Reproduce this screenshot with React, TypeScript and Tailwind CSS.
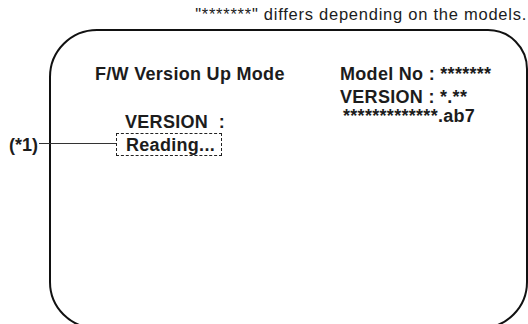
export default function App() {
  return (
    <div className="relative w-[528px] h-[324px] overflow-hidden bg-white text-[#1c1c1c] font-['Liberation_Sans',Arial,sans-serif]">
      <div className="pt-[4px] pr-[1px] text-right text-[16.5px] leading-[20px] tracking-[0.75px] whitespace-nowrap">
        "*******" differs depending on the models.
      </div>

      <div className="mt-[5px] ml-[49px] w-[479px] h-[300px] border-2 border-[#111] rounded-tl-[48px] rounded-tr-[40px] rounded-b-[47px]">
        <div className="flex pt-[32px] font-bold text-[18px] tracking-[0.3px]">
          <div className="pl-[44px] w-[289px] shrink-0">
            <div className="leading-[22px]">F/W Version Up Mode</div>
            <div className="mt-[26px] ml-[30px] leading-[22px] whitespace-pre">VERSION  :</div>
            <div className="ml-[21px] w-[106px] h-[23px] border border-dashed border-[#222] px-[9px] leading-[22px]">
              Reading...
            </div>
          </div>
          <div className="flex flex-col">
            <div className="leading-[23px]">Model No : *******</div>
            <div className="leading-[23px]">VERSION : *.**</div>
            <div className="-mt-[4px] pl-[3px] leading-[23px]">*************.ab7</div>
          </div>
        </div>
      </div>

      <div className="absolute left-[9px] top-[134px] font-bold text-[18px] leading-[22px]">(*1)</div>
      <div className="absolute left-[39px] top-[143px] w-[77px] h-px bg-[#333]" />
    </div>
  );
}
